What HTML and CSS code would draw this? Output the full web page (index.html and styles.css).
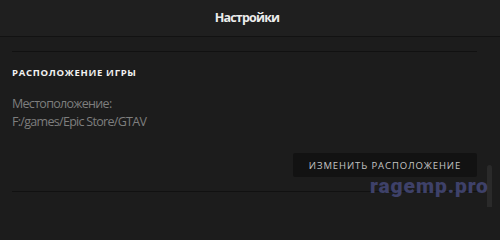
FILE: index.html
```html
<!DOCTYPE html>
<html lang="ru">
<head>
<meta charset="utf-8">
<link rel="stylesheet" href="styles.css">
</head>
<body>
<div class="window">
  <header class="topbar">Настройки</header>
  <main class="content">
    <hr class="sep">
    <section class="section">
      <h2 class="section-title">РАСПОЛОЖЕНИЕ ИГРЫ</h2>
      <p class="location">Местоположение:<br>F:/games/Epic Store/GTAV</p>
      <div class="actions">
        <button class="btn">ИЗМЕНИТЬ РАСПОЛОЖЕНИЕ</button>
      </div>
    </section>
    <hr class="sep">
  </main>
  <div class="scrollbar"></div>
  <div class="watermark">ragemp.pro</div>
</div>
</body>
</html>
```
FILE: styles.css
```css
html, body {
  margin: 0;
  padding: 0;
  background: #1c1c1c;
}
.window {
  position: relative;
  width: 500px;
  height: 207px;
  overflow: hidden;
  background: #1c1c1c;
  font-family: "Open Sans", "Noto Sans", sans-serif;
}
.topbar {
  height: 36px;
  line-height: 36px;
  padding-right: 6px;
  text-align: center;
  background: #1f1f1f;
  border-bottom: 1px solid #121212;
  color: #ececec;
  font-weight: 700;
  font-size: 12.5px;
  letter-spacing: -0.8px;
}
.content {
  padding: 0 23px 0 12px;
}
.sep {
  margin: 0;
  border: 0;
  height: 1px;
  background: #111111;
}
.content > .sep:first-child {
  margin-top: 14px;
}
.section {
  padding: 14px 0 14px;
}
.section-title {
  margin: 0;
  font-size: 9.5px;
  line-height: 14px;
  font-weight: 700;
  letter-spacing: 0.7px;
  color: #f2f2f2;
}
.location {
  margin: 15px 0 0;
  font-size: 12.5px;
  line-height: 18px;
  letter-spacing: -0.7px;
  color: #7e7e7e;
}
.actions {
  display: flex;
  justify-content: flex-end;
  margin-top: 22px;
}
.btn {
  width: 184px;
  height: 24px;
  border: 0;
  border-radius: 2px;
  background: #121212;
  color: #c4c4c4;
  font-family: inherit;
  font-size: 9.5px;
  letter-spacing: 0.9px;
  padding: 0;
}
.scrollbar {
  position: absolute;
  left: 487px;
  top: 165px;
  width: 5px;
  height: 50px;
  border-radius: 3px;
  background: #2a2a2a;
}
.watermark {
  position: absolute;
  left: 370px;
  top: 173px;
  font-family: "Roboto", sans-serif;
  font-weight: 900;
  font-size: 21px;
  line-height: 26px;
  letter-spacing: 0.9px;
  color: #3e4169;
}
```
